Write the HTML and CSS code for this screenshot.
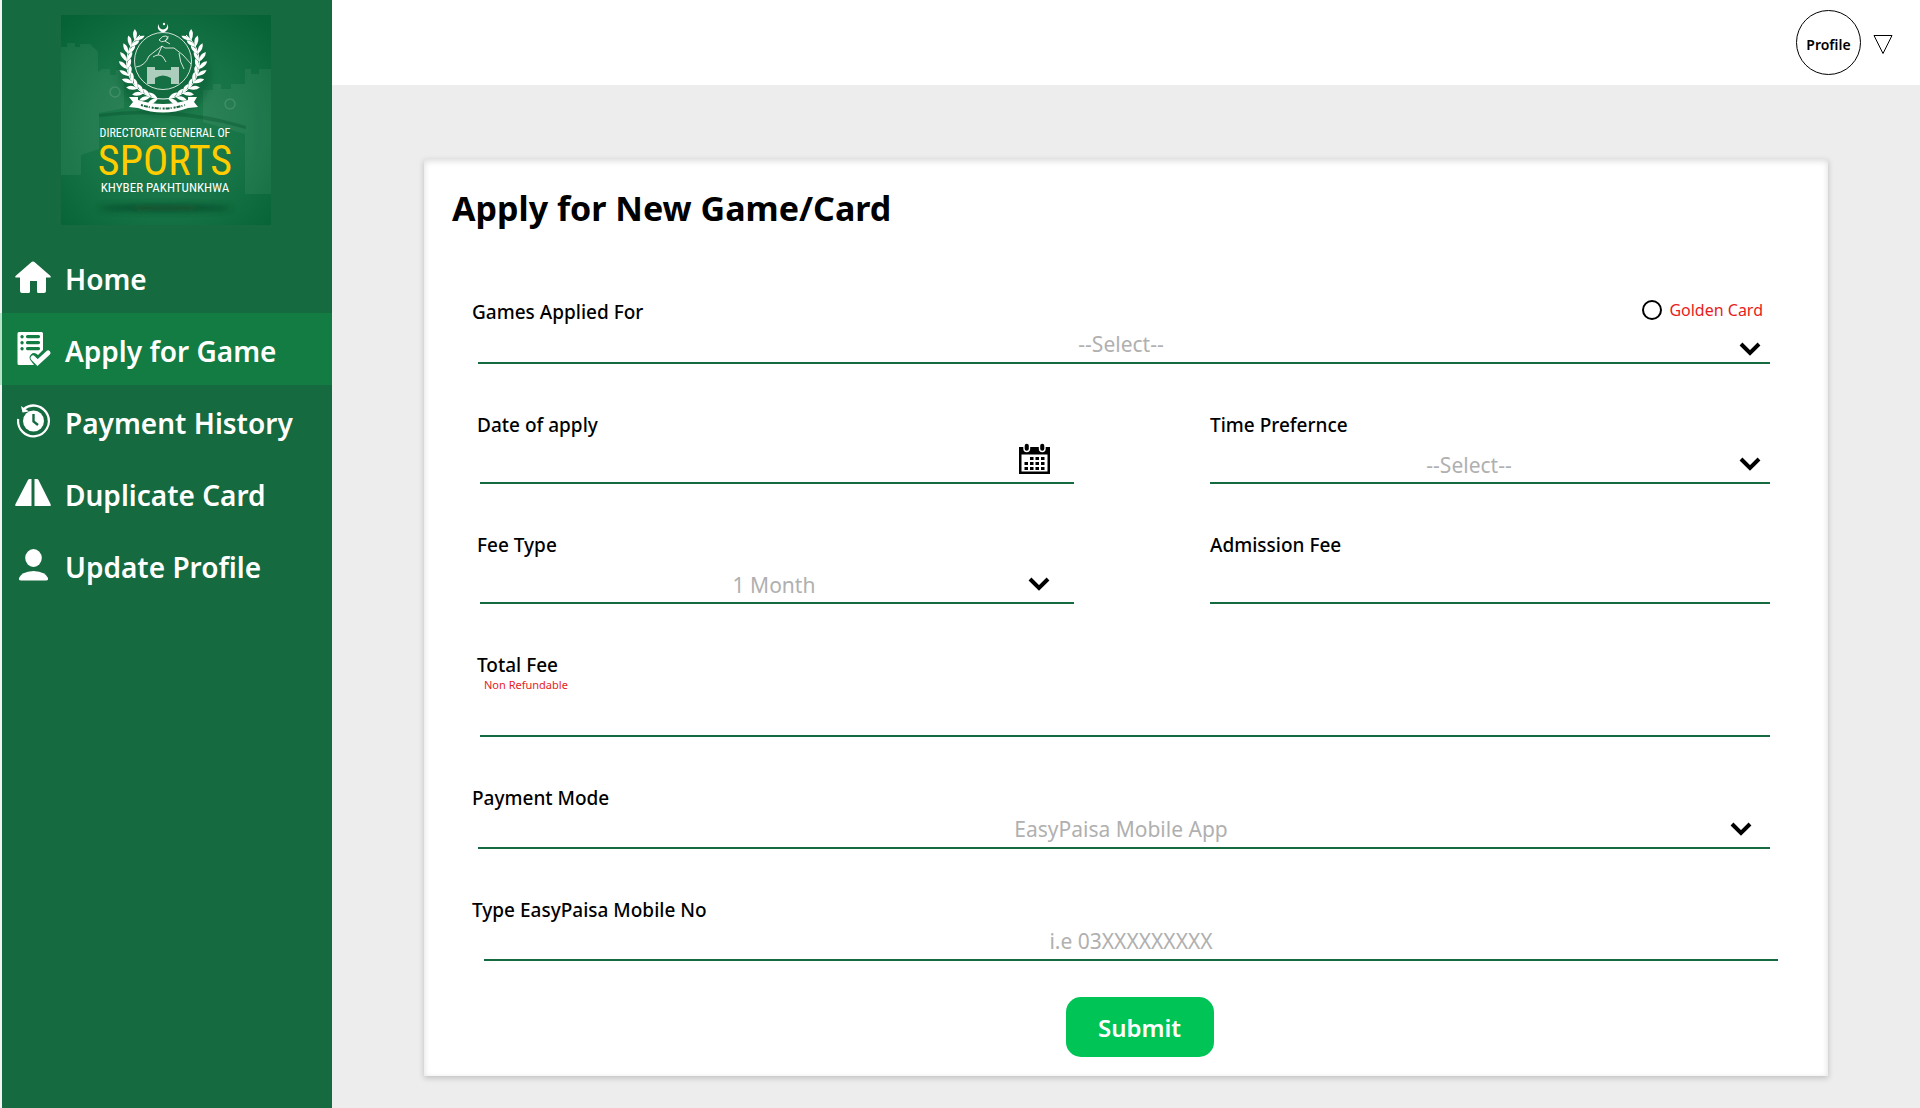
FILE: index.html
```html
<!DOCTYPE html>
<html lang="en">
<head>
<meta charset="utf-8">
<meta name="viewport" content="width=device-width, initial-scale=1">
<title>Apply for New Game/Card</title>
<link rel="stylesheet" href="styles.css">
</head>
<body>
<div class="app">
  <aside class="sidebar">
    <svg class="logo" viewBox="0 0 210 210" role="img" aria-label="Directorate General of Sports, Khyber Pakhtunkhwa">
      <defs>
        <radialGradient id="glow" cx="50%" cy="55%" r="70%">
          <stop offset="0" stop-color="#23804f"/>
          <stop offset=".55" stop-color="#157345"/>
          <stop offset="1" stop-color="#056335"/>
        </radialGradient>
        <filter id="soft" x="-20%" y="-200%" width="140%" height="500%"><feGaussianBlur stdDeviation="3"/></filter>
        <g id="leaf">
          <path d="M1 0Q-2 7 -8 7.500Q-7 1 1 0Z"/>
          <path d="M1 0Q-4 -6 -9 -4.500Q-6 1 1 0Z"/>
        </g>
        <g id="branch">
          <path d="M0 36A36 36 0 0 1 -23 -28" fill="none" stroke="#fff" stroke-width="1"/>
          <use href="#leaf" transform="rotate(10) translate(0 36)"/>
          <use href="#leaf" transform="rotate(22) translate(0 36)"/>
          <use href="#leaf" transform="rotate(34) translate(0 36)"/>
          <use href="#leaf" transform="rotate(46) translate(0 36)"/>
          <use href="#leaf" transform="rotate(58) translate(0 36)"/>
          <use href="#leaf" transform="rotate(70) translate(0 36)"/>
          <use href="#leaf" transform="rotate(82) translate(0 36)"/>
          <use href="#leaf" transform="rotate(94) translate(0 36)"/>
          <use href="#leaf" transform="rotate(106) translate(0 36)"/>
          <use href="#leaf" transform="rotate(118) translate(0 36)"/>
          <use href="#leaf" transform="rotate(130) translate(0 36)"/>
        </g>
      </defs>
      <rect width="210" height="210" fill="url(#glow)"/>
      <g fill="#fff" opacity=".06">
        <path d="M0 32h6v-4h8v4h5v-3h10l8 8v20l4-3h8v6h6v-5h8v38l-25 5v36l-18 6v20H0Z"/>
        <path d="M210 54h-12v5h-8v-5h-6v15h-14v5h-10v-5h-8v6h-10v32l42 12v60h26Z"/>
      </g>
      <g fill="none" stroke="#fff" stroke-width="1.500" opacity=".12"><circle cx="54" cy="77" r="5"/><circle cx="169" cy="89" r="5"/></g>
      <path d="M38 99Q110 88 185 111V114Q110 93 38 102Z" fill="#024a26" opacity=".3"/>
      <ellipse cx="104" cy="60" rx="46" ry="42" fill="#044f2a" opacity=".35" filter="url(#soft)"/>
      <circle cx="102" cy="46" r="28.500" fill="#157043" stroke="#fff" stroke-width=".8"/>
      <g fill="#fff">
        <use href="#branch" transform="translate(102 48)"/>
        <use href="#branch" transform="translate(102 48) scale(-1 1)"/>
        <path d="M98 9A5 5 0 1 0 106 9A4.200 4.200 0 1 1 98 9Z"/>
        <circle cx="103" cy="9" r="1.200"/>
        <path d="M68 82l9 0 0 3Q102 93 127 85l0-3 9 0 -3 5 4 5 -10 1Q102 102 77 93l-9-1 4-5Z"/>
        <path d="M86 52h8v3h16v-3h8v17h-8v-6Q102 58 94 63v6h-8Z" opacity=".65"/>
      </g>
      <g fill="none" stroke="#fff" stroke-width=".8">
        <path d="M75 52Q84 51 88 41L93 37 101 31 104 33 113 33 122 40 130 49M92 42Q98 38 102 42L105 47M101 31L97 40M118 38Q119 48 123 54"/>
        <path d="M98 25Q102 20 105 21T104 26L109 29M98 25Q100 28 104 26T107 21"/>
        <path d="M80 90Q102 97 124 90" stroke="#17653c" stroke-width="2" stroke-dasharray="2 1 4 1 1 2"/>
      </g>
      <ellipse cx="104" cy="193" rx="66" ry="3" fill="#0b3d22" opacity=".8" filter="url(#soft)"/>
      <g class="logo-text" text-anchor="middle">
        <text x="104" y="122" class="logo-top">DIRECTORATE GENERAL OF</text>
        <text x="104" y="160" class="logo-big">SPORTS</text>
        <text x="104" y="177" class="logo-small">KHYBER PAKHTUNKHWA</text>
      </g>
    </svg>
    <nav class="nav">
      <a href="#home">
        <svg width="38" height="34" viewBox="0 0 38 34" fill="#fff"><path d="M19 1.500Q20 1.500 21 2.500L36.500 16Q37.500 17.500 36 17.500H32V31Q32 33 30 33H24.500Q23 33 23 31.500V21H16V31.500Q16 33 14.500 33H8Q6 33 6 31V17.500H2Q.5 17.500 1.500 16L17 2.500Q18 1.500 19 1.500Z"/></svg>
        Home</a>
      <a href="#apply" class="active" aria-current="page">
        <svg width="38" height="36" viewBox="0 0 38 36" fill="#fff"><path fill-rule="evenodd" d="M5 1H27.500Q29 1 29 2.500V19L24 24Q20 20.500 17 23.500T17 30L20 34H5Q3.500 34 3.500 32.500V2.500Q3.500 1 5 1ZM8 4a1.700 1.700 0 1 0 .1 0ZM8 10a1.700 1.700 0 1 0 .1 0ZM8 16a1.700 1.700 0 1 0 .1 0ZM13.500 4a1.500 1.500 0 0 0 0 3.200H24.500a1.500 1.500 0 0 0 0-3.200ZM13.500 10a1.500 1.500 0 0 0 0 3.200H24.500a1.500 1.500 0 0 0 0-3.200ZM13.500 16a1.500 1.500 0 0 0 0 3.200H24.500a1.500 1.500 0 0 0 0-3.200Z"/><path d="M19 27L23.500 31.500 34 22" fill="none" stroke="#fff" stroke-width="5" stroke-linecap="round"/></svg>
        Apply for Game</a>
      <a href="#history">
        <svg width="38" height="36" viewBox="0 0 38 36" fill="none"><path d="M4.200 16A15.400 15.400 0 1 0 10 5.800Q14 2.600 19.500 2.600A15.400 15.400 0 0 1 34.800 18" stroke="#fff" stroke-width="2.200"/><path d="M7 3L8.500 9.500 15 8.500Z" fill="#fff"/><circle cx="19.500" cy="18" r="10.500" fill="#fff"/><path d="M19.500 11V18.500L24 22" stroke="#166a40" stroke-width="2.400"/></svg>
        Payment History</a>
      <a href="#duplicate">
        <svg width="38" height="30" viewBox="0 0 38 30" fill="#fff"><path d="M15.500 1H17.500V28H2.500Q.5 28 1.500 26L14 2Q14.500 1 15.500 1ZM20.500 1H23Q24 1 24.500 2L36.500 26Q37.500 28 35.500 28H20.500Z"/></svg>
        Duplicate Card</a>
      <a href="#profile">
        <svg width="38" height="34" viewBox="0 0 38 34" fill="#fff"><ellipse cx="19.500" cy="10" rx="8.300" ry="9"/><path d="M7 32.500Q4.500 32.500 5 30Q7 24 19.500 23Q32 24 34 30Q34.500 32.500 32 32.500Z"/></svg>
        Update Profile</a>
    </nav>
  </aside>

  <div class="page">
    <header class="topbar">
      <button type="button" class="avatar">Profile</button>
      <button type="button" class="menu" aria-label="Open profile menu">
        <svg width="20" height="21" viewBox="0 0 20 21" fill="none" stroke="#000" stroke-width="1"><path d="M1 1.500H19L10 19.500Z"/></svg>
      </button>
    </header>

    <main class="content">
      <form class="card">
        <h1>Apply for New Game/Card</h1>

        <div class="rows">
          <div class="field">
            <div class="label-row">
              <label for="games">Games Applied For</label>
              <span class="golden"><input type="radio" id="golden"><label for="golden">Golden Card</label></span>
            </div>
            <div class="control">
              <select id="games"><option>--Select--</option></select>
              <svg class="chevron low" viewBox="0 0 22 15"><path d="M2 2L11 11 20 2"/></svg>
            </div>
          </div>

          <div class="split">
            <div class="field tall indent">
              <label for="date">Date of apply</label>
              <div class="control">
                <input type="text" id="date">
                <svg class="calendar" width="31" height="31" viewBox="0 0 31 31"><path fill-rule="evenodd" d="M0 4H31V31H0ZM2.500 11.500V28.500H28.500V11.500Z"/><g stroke="#fff" stroke-width="1.400"><rect x="5" y="0" width="5.500" height="8.500" rx="2.700"/><rect x="20.500" y="0" width="5.500" height="8.500" rx="2.700"/></g><path d="M11 14h3.500v3H11zM16.500 14H20v3h-3.500zM22 14h3.500v3H22zM5.500 19H9v3H5.500zM11 19h3.500v3H11zM16.500 19H20v3h-3.500zM22 19h3.500v3H22zM5.500 24H9v3H5.500zM11 24h3.500v3H11zM16.500 24H20v3h-3.500zM22 24h3.500v3H22z"/></svg>
              </div>
            </div>
            <div class="field tall flush">
              <label for="time">Time Prefernce</label>
              <div class="control">
                <select id="time" class="short"><option>--Select--</option></select>
                <svg class="chevron" viewBox="0 0 22 15"><path d="M2 2L11 11 20 2"/></svg>
              </div>
            </div>
          </div>

          <div class="split">
            <div class="field tall indent">
              <label for="fee-type">Fee Type</label>
              <div class="control">
                <select id="fee-type"><option>1 Month</option></select>
                <svg class="chevron" viewBox="0 0 22 15"><path d="M2 2L11 11 20 2"/></svg>
              </div>
            </div>
            <div class="field tall flush">
              <label for="admission">Admission Fee</label>
              <div class="control"><input type="text" id="admission"></div>
            </div>
          </div>

          <div class="field tall indent">
            <label for="total">Total Fee</label>
            <small class="note">Non Refundable</small>
            <div class="control"><input type="text" id="total"></div>
          </div>

          <div class="field">
            <label for="mode">Payment Mode</label>
            <div class="control">
              <select id="mode"><option>EasyPaisa Mobile App</option></select>
              <svg class="chevron inner" viewBox="0 0 22 15"><path d="M2 2L11 11 20 2"/></svg>
            </div>
          </div>

          <div class="field shifted">
            <label for="mobile">Type EasyPaisa Mobile No</label>
            <div class="control"><input type="tel" id="mobile" placeholder="i.e 03XXXXXXXXX"></div>
          </div>
        </div>

        <div class="actions"><button type="submit" class="submit">Submit</button></div>
      </form>
    </main>
  </div>
</div>
</body>
</html>
```
FILE: styles.css
```css
* { box-sizing: border-box; }

body {
  margin: 0;
  font-family: "Noto Sans", "Open Sans", sans-serif;
  color: #000;
  background: #ededed;
}

button, input, select { font: inherit; color: inherit; }

.app {
  display: grid;
  grid-template-columns: 332px 1fr;
  min-height: 100vh;
}

/* Sidebar */
.sidebar {
  padding-top: 15px;
  background: #166a40;
  border-left: 2px solid #f4f4f4;
}

.logo {
  display: block;
  width: 210px;
  height: 210px;
  margin: 0 0 16px 59px;
}

.logo-text { font-family: "Roboto Condensed", "Liberation Sans Narrow", "Liberation Sans", sans-serif; }
.logo-top { font-size: 12px; fill: #fff; }
.logo-small { font-size: 13px; fill: #fff; }
.logo-big { font-size: 42px; fill: #fc0; }

.nav a {
  display: flex;
  align-items: center;
  gap: 13px;
  height: 72px;
  padding: 3px 0 0 12px;
  color: #fff;
  font-size: 28px;
  font-weight: 600;
  text-decoration: none;
}

.nav svg { margin-bottom: 3px; }

.nav a.active {
  background: #127c43;
  box-shadow: -2px 0 #b4e3c8;
}

/* Top bar */
.topbar {
  display: flex;
  align-items: center;
  justify-content: flex-end;
  gap: 12px;
  height: 85px;
  padding-right: 27px;
  background: #fff;
}

.avatar {
  width: 65px;
  height: 65px;
  padding: 4px 0 0;
  border: 1px solid #000;
  border-radius: 50%;
  background: none;
  font-size: 14px;
  font-weight: 600;
}

.menu { display: flex; padding: 4px 0 0; border: 0; background: none; }

/* Form card */
.content { padding: 74px 92px 32px; }

.card {
  padding: 26px 58px 19px 48px;
  background: #fff;
  box-shadow: 0 2px 6px rgba(0, 0, 0, .2), inset 0 2px 6px rgba(0, 0, 0, .14);
}

h1 {
  margin: 0 0 68px -20px;
  font-size: 34px;
  line-height: 46px;
  font-weight: 700;
}

.rows { display: grid; gap: 48px; }

.split {
  display: grid;
  grid-template-columns: 43fr 40fr;
  gap: 136px;
}

.field label {
  display: block;
  font-size: 19px;
  line-height: 26px;
  font-weight: 500;
}

.label-row { display: flex; justify-content: space-between; height: 27px; }

.field .golden {
  display: flex;
  align-items: center;
  gap: 7px;
  height: 22px;
  padding-right: 7px;
  color: #e81c1c;
}

.field .golden label { font-size: 16px; font-weight: 400; }

.golden input {
  appearance: none;
  width: 20px;
  height: 20px;
  margin: 0;
  border: 2px solid #000;
  border-radius: 50%;
}

.control {
  display: grid;
  height: 38px;
  margin-left: 6px;
  border-bottom: 2px solid #166a40;
}

.control > * { grid-area: 1 / 1; }

.control input, .control select {
  appearance: none;
  width: 100%;
  min-width: 0;
  padding: 0;
  border: 0;
  outline: 0;
  background: none;
  color: #b0b0b0;
  font-size: 21px;
  text-align: center;
  text-align-last: center;
}

.control input::placeholder { color: #b0b0b0; opacity: 1; }
.control select { padding-right: 6px; }
.control select.short { padding-right: 42px; }

.chevron {
  width: 22px;
  height: 15px;
  place-self: end;
  margin: 0 9px 10px 0;
  fill: none;
  stroke: #000;
  stroke-width: 4;
  pointer-events: none;
}

.chevron.low { margin-bottom: 5px; }
.chevron.inner { margin-right: 18px; }

.calendar { place-self: end; margin: 0 24px 7px 0; }

.tall .control { height: 46px; padding-top: 10px; }
.tall .calendar { margin-top: -10px; margin-bottom: 8px; }
.indent label { padding-left: 5px; }
.indent .control { margin-left: 8px; }
.indent .chevron { margin-right: 24px; }
.flush .control { margin-left: 0; }
.shifted .control { margin: 0 -8px 0 12px; }

.note {
  display: block;
  padding-left: 12px;
  color: #e81c1c;
  font-size: 11px;
  line-height: 13px;
}

.actions {
  display: flex;
  justify-content: center;
  padding: 36px 0 0 37px;
}

.submit {
  width: 148px;
  height: 60px;
  padding: 0;
  border: 0;
  border-radius: 15px;
  background: #00c455;
  color: #fff;
  font-size: 24px;
  font-weight: 600;
}
```
